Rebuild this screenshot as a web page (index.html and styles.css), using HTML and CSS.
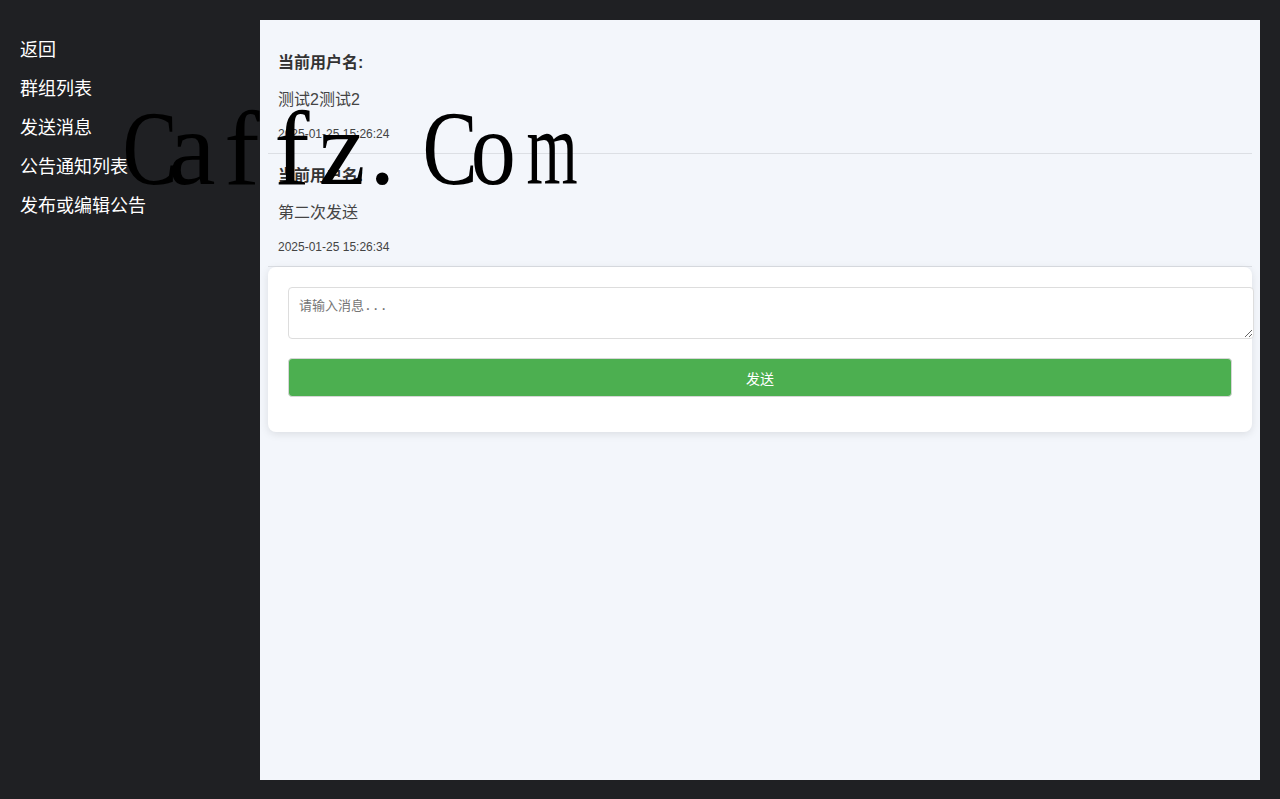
FILE: index.html
```html
<!DOCTYPE html>
<html lang="zh-CN">
<head>
  <meta charset="UTF-8" />
  <meta name="viewport" content="width=device-width, initial-scale=1.0"/>
  <title>群组聊天</title>
  <link rel="stylesheet" href="styles.css">
</head>
<body>

  <div class="sidebar">
    <ul>
      <li><a href="#">返回</a></li>
      <li><a href="#">群组列表</a></li>
      <li><a href="#">发送消息</a></li>
      <li><a href="#">公告通知列表</a></li>
      <li><a href="#">发布或编辑公告</a></li>
    </ul>
  </div>

  <div class="main">
    <div class="message">
      <p class="msg-user">当前用户名:</p>
      <p class="msg-text">测试2测试2</p>
      <p class="msg-time">2025-01-25 15:26:24</p>
    </div>
    <div class="message">
      <p class="msg-user">当前用户名:</p>
      <p class="msg-text">第二次发送</p>
      <p class="msg-time">2025-01-25 15:26:34</p>
    </div>

    <div class="send-box">
      <textarea placeholder="请输入消息..."></textarea>
      <button class="send-button">发送</button>
    </div>
  </div>

  <div class="watermark"><span class="cap">C</span><span>a</span><span>f</span><span>f</span><span>z</span><span class="dot">.</span><span class="cap">C</span><span class="round">o</span><span class="narrow">m</span></div>

</body>
</html>
```

FILE: styles.css
```css
* { box-sizing: border-box; margin: 0; padding: 0; }
body {
  font-family: "Liberation Sans", "Noto Sans CJK SC", sans-serif;
  background-color: #1f2023;
  color: #333;
  display: flex;
  height: 799px;
  padding: 20px 20px 19px 20px;
  overflow: hidden;
}
.sidebar {
  width: 240px;
  flex-shrink: 0;
  padding-top: 11px;
}
.sidebar ul {
  list-style: none;
}
.sidebar li {
  height: 39px;
  line-height: 39px;
  font-size: 18px;
}
.sidebar a {
  color: #fff;
  text-decoration: none;
}
.main {
  flex: 1;
  background-color: #f3f6fb;
  padding: 21px 8px;
}
.message {
  padding: 12px 10px 10px 10px;
  border-bottom: 1px solid #dcdfe4;
}
.message p {
  margin: 0;
}
.msg-user {
  font-size: 16px;
  font-weight: bold;
  line-height: 20px;
}
.message .msg-text {
  font-size: 16px;
  line-height: 20px;
  margin: 17px 0 16px 0;
  color: #444;
}
.msg-time {
  font-size: 12px;
  line-height: 17px;
  color: #444;
}
.send-box {
  background-color: #fff;
  border-radius: 8px;
  box-shadow: 0 2px 8px rgba(0,0,0,0.1);
  padding: 20px 20px 35px 20px;
}
.send-box textarea {
  display: block;
  box-sizing: content-box;
  width: 100%;
  height: 30px;
  padding: 10px;
  border: 1px solid #ddd;
  border-radius: 4px;
  font-family: "DejaVu Sans Mono", "Noto Sans CJK SC", monospace;
  font-size: 13px;
  line-height: 16px;
  background-color: #fff;
}
.send-box textarea::placeholder {
  color: #757575;
}
.send-button {
  display: block;
  width: 100%;
  height: 39px;
  margin-top: 19px;
  background-color: #4caf50;
  color: #fff;
  border: 1px solid #d6d6d6;
  border-radius: 4px;
  font-family: "Liberation Sans", "Noto Sans CJK SC", sans-serif;
  font-size: 14px;
  cursor: pointer;
}
.watermark {
  position: absolute;
  left: 117px;
  top: 94px;
  font-family: "Liberation Serif", serif;
  font-size: 106px;
  line-height: 110px;
  color: #000;
  white-space: pre;
  pointer-events: none;
}
.watermark span {
  display: inline-block;
  width: 50px;
  text-align: center;
}
.watermark .cap {
  transform: scaleX(0.78);
}
.watermark .round {
  transform: scaleX(0.85);
}
.watermark .narrow {
  transform: scaleX(0.62);
}
.watermark .dot {
  text-align: left;
  padding-left: 2px;
}
```
